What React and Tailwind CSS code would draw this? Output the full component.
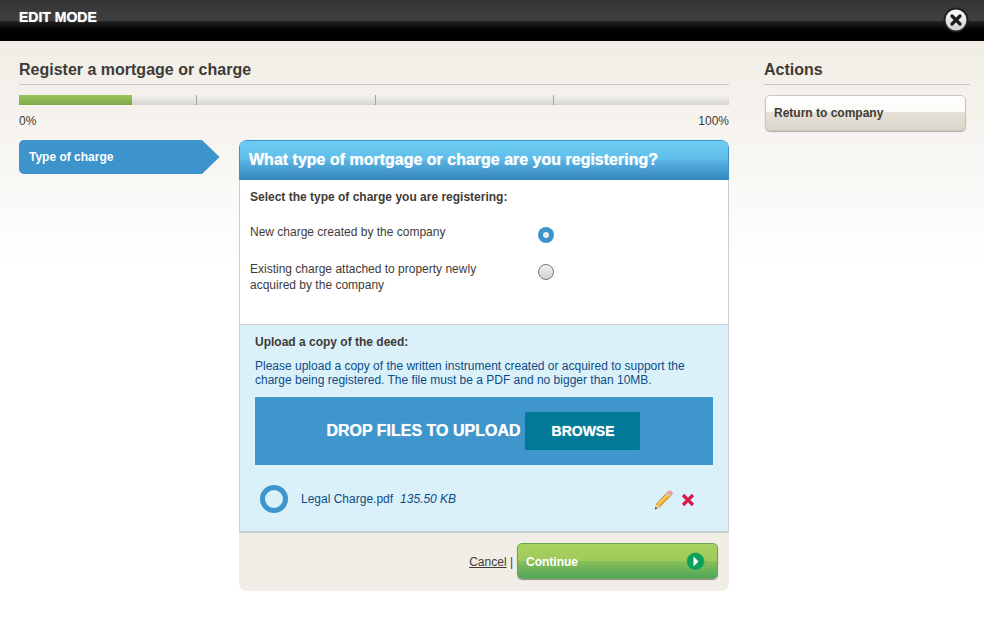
import React from "react";

function Close() {
  return (
    <svg width="28" height="28" viewBox="0 0 28 28" className="absolute left-[942px] top-[6px]">
      <defs>
        <linearGradient id="cg" x1="0" y1="0" x2="0" y2="1">
          <stop offset="0" stopColor="#ffffff" />
          <stop offset="1" stopColor="#cfcdc9" />
        </linearGradient>
      </defs>
      <circle cx="14" cy="14" r="11.5" fill="url(#cg)" stroke="#1f1f1f" strokeWidth="2" />
      <path d="M10 10 18 18M18 10 10 18" stroke="#1c1c1c" strokeWidth="3.2" strokeLinecap="round" />
    </svg>
  );
}

function Radio({ on }) {
  if (on) {
    return (
      <span className="flex h-4 w-4 items-center justify-center rounded-full bg-[#3d93cb]">
        <span className="h-[6px] w-[6px] rounded-full bg-[#e9eef2]" />
      </span>
    );
  }
  return <span className="block h-4 w-4 rounded-full border border-[#77777a] bg-gradient-to-b from-[#f4f4f4] to-[#cfcfcf]" />;
}

function Pencil() {
  return (
    <svg width="21" height="22" viewBox="0 0 21 22">
      <path d="M15.5 2.2 19 5.4 6.5 18 2.5 19.8 3.6 15z" fill="#f7ae1e" stroke="#a9741a" strokeWidth="0.7" />
      <path d="M14.6 3.2 17.9 6.4 16.4 7.9 13.2 4.7z" fill="#c9c9c9" />
      <path d="M15.6 2.2Q17 .9 18.4 2L19.6 3.3Q20.6 4.6 19 5.6L17.9 6.4 14.6 3.2z" fill="#ef9aa8" />
      <path d="M5 15.5 15 5.5" stroke="#fbd684" strokeWidth="1.2" />
      <path d="M3.6 15 6.5 18 2.5 19.8z" fill="#ecd9b0" />
      <path d="M2.9 18 4.2 19.2 1.6 20.6z" fill="#222" />
    </svg>
  );
}

export default function App() {
  return (
    <div className="relative min-h-[633px] bg-white font-['Liberation_Sans',Arial,sans-serif] text-[12px] text-[#3f3b37]">
      <header className="h-[41px]">
        <div className="h-[21px] bg-gradient-to-b from-[#343434] to-[#404040] pl-[19px]">
          <span className="text-[14px] font-bold leading-[35px] text-white [text-shadow:0_0_1px_rgba(255,255,255,0.7)]">EDIT MODE</span>
        </div>
        <div className="h-[20px] bg-gradient-to-b from-[#232323] to-black to-[75%]" />
      </header>
      <Close />

      <div className="flex h-[592px] gap-[35px] bg-gradient-to-b from-[#f1ede6] to-white to-[38%] pl-[19px] pr-[14px]">
        <main className="w-[710px]">
          <h1 className="h-[44px] border-b border-[#cbc6bf] pt-[19px] text-[16px] font-bold leading-[19px]">Register a mortgage or charge</h1>

          <div className="mt-[10px] flex h-[10px] bg-gradient-to-b from-[#f3f2f0] to-[#d6d4d1]">
            <div className="h-full w-[113px] bg-gradient-to-b from-[#9ac45c] to-[#7fa94e]" />
            <div className="h-full w-[65px] border-r border-[#a8a6a3]" />
            <div className="h-full w-[179px] border-r border-[#a8a6a3]" />
            <div className="h-full w-[178px] border-r border-[#a8a6a3]" />
          </div>
          <div className="mt-[9px] flex justify-between leading-[14px]">
            <span>0%</span>
            <span>100%</span>
          </div>

          <div className="mt-[12px] flex gap-[20px]">
            <nav className="w-[200px]">
              <div className="relative h-[34px] w-[182px] rounded-l-[5px] bg-[#3d93cb] pl-[10px] text-[12px] font-bold leading-[35px] text-white">
                Type of charge
                <svg width="19" height="34" viewBox="0 0 19 34" className="absolute left-[182px] top-0">
                  <path d="M0 0H1L18.5 17 1 34H0z" fill="#3d93cb" />
                </svg>
              </div>
            </nav>

            <section className="w-[490px] overflow-hidden rounded-[8px] bg-[#f1eee7]">
              <div className="h-[40px] rounded-t-[6px] border border-b-0 border-[#3a90c9] bg-[linear-gradient(#6ccdf2,#5fbdea_50%,#58b2e2_50%,#3686bd)] pl-[9px] text-[16px] font-bold leading-[38px] text-white [text-shadow:0_0_1px_rgba(255,255,255,0.7)]">
                What type of mortgage or charge are you registering?
              </div>

              <div className="h-[145px] border-x border-b border-[#cdcdcd] bg-white pl-[10px] pt-[10px]">
                <p className="font-bold leading-[15px]">Select the type of charge you are registering:</p>
                <div className="mt-[20px] flex">
                  <p className="w-[288px] leading-[15px]">New charge created by the company</p>
                  <div className="pt-[2px]"><Radio on /></div>
                </div>
                <div className="mt-[18px] flex">
                  <p className="w-[288px] leading-[16px]">Existing charge attached to property newly<br />acquired by the company</p>
                  <div className="pt-[3px]"><Radio /></div>
                </div>
              </div>

              <div className="h-[208px] border-x border-b-2 border-[#cdcdcd] bg-[#dbf1fa] px-[15px] pt-[10px]">
                <p className="font-bold leading-[15px]">Upload a copy of the deed:</p>
                <p className="mt-[9px] leading-[14px] text-[#0d4c86]">
                  Please upload a copy of the written instrument created or acquired to support the<br />charge being registered. The file must be a PDF and no bigger than 10MB.
                </p>
                <div className="mt-[10px] flex h-[68px] items-center justify-center bg-[#3f96cc] pr-[2px]">
                  <span className="text-[16px] font-bold text-white [text-shadow:0_0_1px_rgba(255,255,255,0.7)]">DROP FILES TO UPLOAD</span>
                  <span className="ml-[4px] flex h-[38px] w-[115px] items-center justify-center rounded-[1px] bg-[#007a96] pl-[2px] text-[14px] font-bold text-white [text-shadow:0_0_1px_rgba(255,255,255,0.7)]">BROWSE</span>
                </div>
                <div className="mt-[19px] flex h-[30px] items-center pl-[5px]">
                  <span className="h-[28px] w-[28px] rounded-full border-[5px] border-[#3f96cc]" />
                  <span className="ml-[13px] text-[#0d4c86]">Legal Charge.pdf</span>
                  <span className="ml-[7px] italic text-[#0d4c86]">135.50 KB</span>
                  <span className="ml-auto mr-[18px] flex items-center gap-[7px] pt-[1px]">
                    <Pencil />
                    <svg width="14" height="14" viewBox="0 0 14 14">
                      <path d="M2 2 12 12M12 2 2 12" stroke="#d81b4c" strokeWidth="3.2" />
                    </svg>
                  </span>
                </div>
              </div>

              <div className="flex h-[58px] items-start justify-end pr-[11px] pt-[10px]">
                <span className="mt-[12px] leading-[14px]"><a className="underline">Cancel</a> |</span>
                <button className="relative ml-[4px] flex h-[36px] w-[201px] items-center rounded-[5px] border border-[#6aa552] bg-[linear-gradient(#a8d25f,#9fca5a_50%,#8bc058_50%,#4fa658)] pl-[8px] pt-[1px] text-[12px] font-bold text-white shadow-[0_1px_1px_rgba(0,0,0,0.4)]">
                  Continue
                  <svg width="19" height="19" viewBox="0 0 19 19" className="absolute right-[12px] top-[8px]">
                    <circle cx="9.5" cy="9.5" r="9" fill="#0aa05a" stroke="#7cc05a" strokeWidth="0.8" />
                    <path d="M7.5 4.5 12.5 9.5 7.5 14.5z" fill="#fff" />
                  </svg>
                </button>
              </div>
            </section>
          </div>
        </main>

        <aside className="w-[206px]">
          <h2 className="h-[44px] border-b border-[#cbc6bf] pt-[19px] text-[16px] font-bold leading-[19px]">Actions</h2>
          <button className="relative ml-px mt-[10px] block h-[36px] w-[201px] rounded-[5px] border border-[#c9c5be] bg-[linear-gradient(#ffffff,#fbfaf6_47%,#e6e2d9_47%,#dad5c9)] pl-[8px] text-left text-[12px] font-bold leading-[34px] shadow-[0_1px_1px_rgba(0,0,0,0.3)]">
            Return to company
          </button>
        </aside>
      </div>
    </div>
  );
}
